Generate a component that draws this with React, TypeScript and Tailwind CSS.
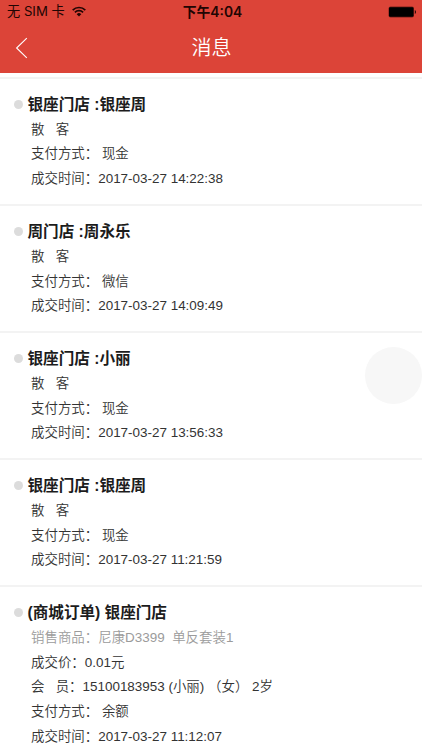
interface MessageLine {
    text: string;
    muted?: boolean;
}

interface Message {
    title: string;
    lines: MessageLine[];
}

const walkIn = (title: string, payment: string, time: string): Message => ({
    title,
    lines: [
        { text: "散   客" },
        { text: `支付方式： ${payment}` },
        { text: `成交时间：${time}` },
    ],
});

const messages: Message[] = [
    walkIn("银座门店 :银座周", "现金", "2017-03-27 14:22:38"),
    walkIn("周门店 :周永乐", "微信", "2017-03-27 14:09:49"),
    walkIn("银座门店 :小丽", "现金", "2017-03-27 13:56:33"),
    walkIn("银座门店 :银座周", "现金", "2017-03-27 11:21:59"),
    {
        title: "(商城订单) 银座门店",
        lines: [
            { text: "销售商品：尼康D3399  单反套装1", muted: true },
            { text: "成交价：0.01元" },
            { text: "会   员：15100183953 (小丽) （女） 2岁" },
            { text: "支付方式： 余额" },
            { text: "成交时间：2017-03-27 11:12:07" },
        ],
    },
];

const WifiIcon = () => (
    <svg className="mb-[2px] ml-[7px] h-[11px] w-[14px]" viewBox="0 0 14 11">
        <g fill="none" stroke="#210503" strokeWidth="1.7">
            <path d="M0.7 4.1a8.9 8.9 0 0 1 12.6 0" />
            <path d="M2.9 6.4a5.8 5.8 0 0 1 8.2 0" />
        </g>
        <path d="M4.7 8.2a3.25 3.25 0 0 1 4.6 0L7 10.5z" fill="#210503" />
    </svg>
);

const BatteryIcon = () => (
    <svg className="h-[12px] w-[29px]" viewBox="0 0 29 12">
        <rect x="0.5" y="0.5" width="25.5" height="11" rx="2" fill="#7d211a" />
        <rect x="1" y="1.2" width="24.5" height="9.6" rx="1.2" fill="#000" />
        <path d="M26.8 4c1.6.5 1.6 3.5 0 4z" fill="#210503" />
    </svg>
);

const StatusBar = () => (
    <div className="grid h-[22px] grid-cols-3 items-center pt-[2px] font-['Inter','Noto_Sans_CJK_SC',sans-serif] text-[#210503]">
        <div className="flex items-center pl-[7px] text-[13.2px] whitespace-pre">
            无 SIM 卡
            <WifiIcon />
        </div>
        <div className="pl-[3px] text-center text-[13.8px] font-semibold">
            下午4:04
        </div>
        <div className="flex justify-end pr-[5px]">
            <BatteryIcon />
        </div>
    </div>
);

const NavBar = () => (
    <div className="grid h-[51px] grid-cols-3 items-center">
        <svg className="ml-[15px] h-[22px] w-[13px]" viewBox="0 0 13 22">
            <path
                d="M11.8 1.2 1.6 11 11.8 20.8"
                fill="none"
                stroke="#fff"
                strokeWidth="1.1"
            />
        </svg>
        <h1 className="pl-[1px] text-center text-[20px] leading-none font-[350] text-white">
            消息
        </h1>
    </div>
);

const MessageItem = ({ message }: { message: Message }) => (
    <li className="border-b-2 border-[#f3f3f3] pt-[13.6px] pb-[12.2px] whitespace-pre">
        <div className="flex h-[25.2px] items-center pl-[13.5px]">
            <span className="mb-[2.2px] size-[9px] rounded-full bg-[#dcdcdc]" />
            <h2 className="mb-[1px] ml-[5px] text-[15.6px] leading-none font-bold text-[#1c1c1c]">
                {message.title}
            </h2>
        </div>
        {message.lines.map((line) => (
            <p
                key={line.text}
                className={`h-[24.7px] pl-[31px] text-[13.45px] leading-[24.7px] font-[350] ${
                    line.muted ? "text-[#9b9b9b]" : "text-[#333]"
                }`}
            >
                {line.text}
            </p>
        ))}
    </li>
);

export default function App() {
    return (
        <div
            lang="zh-CN"
            className="relative h-[750px] w-full overflow-hidden bg-white font-['Liberation_Sans','Noto_Sans_CJK_SC',sans-serif]"
        >
            <header className="bg-[#dc4438]">
                <StatusBar />
                <NavBar />
            </header>
            <ul className="mt-[4px] border-t-2 border-[#f3f3f3]">
                {messages.map((message, i) => (
                    <MessageItem key={i} message={message} />
                ))}
            </ul>
            {/* floating touch button */}
            <div className="absolute top-[347px] right-0 size-[57px] rounded-full bg-[#f7f7f7]" />
        </div>
    );
}
